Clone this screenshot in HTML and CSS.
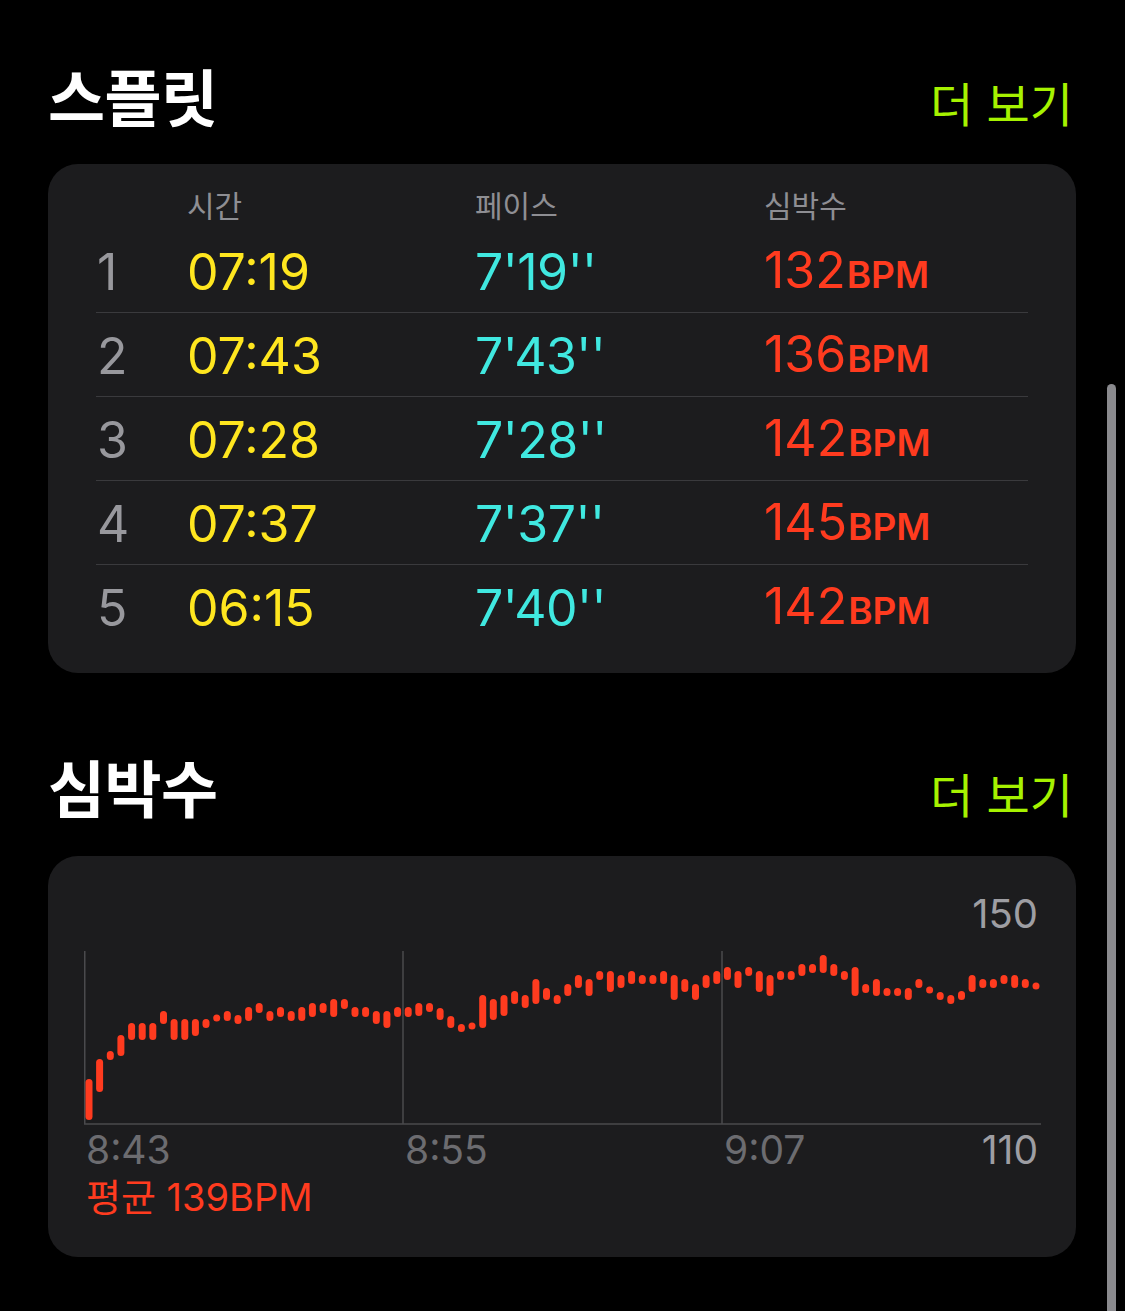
FILE: index.html
```html
<!DOCTYPE html>
<html lang="ko">
<head>
<meta charset="utf-8">
<title>스플릿 · 심박수</title>
<link rel="stylesheet" href="styles.css">
</head>
<body>
<main class="page">
  <header class="sec-head first">
    <h2 class="sec-title">스플릿</h2>
    <a class="more">더 보기</a>
  </header>
  <section class="card splits">
    <div class="row head">
      <span></span><span>시간</span><span>페이스</span><span>심박수</span>
    </div>
    <div class="row">
      <span class="idx">1</span><span class="time">07:19</span><span class="pace">7'19''</span><span class="hr">132<small>BPM</small></span>
    </div>
    <div class="row">
      <span class="idx">2</span><span class="time">07:43</span><span class="pace">7'43''</span><span class="hr">136<small>BPM</small></span>
    </div>
    <div class="row">
      <span class="idx">3</span><span class="time">07:28</span><span class="pace">7'28''</span><span class="hr">142<small>BPM</small></span>
    </div>
    <div class="row">
      <span class="idx">4</span><span class="time">07:37</span><span class="pace">7'37''</span><span class="hr">145<small>BPM</small></span>
    </div>
    <div class="row last">
      <span class="idx">5</span><span class="time">06:15</span><span class="pace">7'40''</span><span class="hr">142<small>BPM</small></span>
    </div>
  </section>

  <header class="sec-head second">
    <h2 class="sec-title">심박수</h2>
    <a class="more">더 보기</a>
  </header>
  <section class="card heart">
    <div class="ymax">150</div>
    <svg class="chart" width="957" height="180" viewBox="84 945 957 180">
      <g class="grid">
        <line x1="84.75" y1="950" x2="84.75" y2="1123"/>
        <line x1="403" y1="950" x2="403" y2="1123"/>
        <line x1="722" y1="950" x2="722" y2="1123"/>
        <line x1="84" y1="1123" x2="1041" y2="1123"/>
      </g>
      <g class="bars">
        <line x1="89" y1="1081.5" x2="89" y2="1115.5"/>
        <line x1="99.6" y1="1061.5" x2="99.6" y2="1087.5"/>
        <line x1="110.3" y1="1053.5" x2="110.3" y2="1055.5"/>
        <line x1="120.9" y1="1037.5" x2="120.9" y2="1051.5"/>
        <line x1="131.6" y1="1025.5" x2="131.6" y2="1035.5"/>
        <line x1="142.2" y1="1025.5" x2="142.2" y2="1035.5"/>
        <line x1="152.8" y1="1025.5" x2="152.8" y2="1035.5"/>
        <line x1="163.5" y1="1013.5" x2="163.5" y2="1019.5"/>
        <line x1="174.1" y1="1021.5" x2="174.1" y2="1035.5"/>
        <line x1="184.8" y1="1021.5" x2="184.8" y2="1035.5"/>
        <line x1="195.4" y1="1021.5" x2="195.4" y2="1031.5"/>
        <line x1="206" y1="1021.5" x2="206" y2="1023.5"/>
        <line x1="216.7" y1="1017" x2="216.7" y2="1017.1"/>
        <line x1="227.3" y1="1013.5" x2="227.3" y2="1016.5"/>
        <line x1="238" y1="1017.5" x2="238" y2="1019.5"/>
        <line x1="248.6" y1="1009.5" x2="248.6" y2="1016.5"/>
        <line x1="259.2" y1="1005.5" x2="259.2" y2="1008.5"/>
        <line x1="269.9" y1="1013.5" x2="269.9" y2="1016.5"/>
        <line x1="280.5" y1="1009.5" x2="280.5" y2="1012.5"/>
        <line x1="291.2" y1="1013.5" x2="291.2" y2="1016.5"/>
        <line x1="301.8" y1="1009.5" x2="301.8" y2="1016.5"/>
        <line x1="312.4" y1="1005.5" x2="312.4" y2="1012.5"/>
        <line x1="323.1" y1="1005.5" x2="323.1" y2="1008.5"/>
        <line x1="333.7" y1="1001.5" x2="333.7" y2="1012.5"/>
        <line x1="344.4" y1="1001.5" x2="344.4" y2="1004.5"/>
        <line x1="355" y1="1009.5" x2="355" y2="1012.5"/>
        <line x1="365.6" y1="1009.5" x2="365.6" y2="1012.5"/>
        <line x1="376.3" y1="1013.5" x2="376.3" y2="1019.5"/>
        <line x1="386.9" y1="1013.5" x2="386.9" y2="1023.5"/>
        <line x1="397.6" y1="1009.5" x2="397.6" y2="1012.5"/>
        <line x1="408.2" y1="1009.5" x2="408.2" y2="1012.5"/>
        <line x1="418.8" y1="1005.5" x2="418.8" y2="1011.5"/>
        <line x1="429.5" y1="1005.5" x2="429.5" y2="1007.5"/>
        <line x1="440.1" y1="1010.5" x2="440.1" y2="1015.5"/>
        <line x1="450.8" y1="1018.5" x2="450.8" y2="1023.5"/>
        <line x1="461.4" y1="1026.5" x2="461.4" y2="1027.5"/>
        <line x1="472" y1="1025" x2="472" y2="1025.1"/>
        <line x1="482.7" y1="997.5" x2="482.7" y2="1023.5"/>
        <line x1="493.3" y1="1001.5" x2="493.3" y2="1015.5"/>
        <line x1="504" y1="997.5" x2="504" y2="1011.5"/>
        <line x1="514.6" y1="993.5" x2="514.6" y2="999.5"/>
        <line x1="525.2" y1="997.5" x2="525.2" y2="1003.5"/>
        <line x1="535.9" y1="981.5" x2="535.9" y2="999.5"/>
        <line x1="546.5" y1="990.5" x2="546.5" y2="995.5"/>
        <line x1="557.2" y1="997.5" x2="557.2" y2="999.5"/>
        <line x1="567.8" y1="986.5" x2="567.8" y2="991.5"/>
        <line x1="578.4" y1="977.5" x2="578.4" y2="983.5"/>
        <line x1="589.1" y1="981.5" x2="589.1" y2="991.5"/>
        <line x1="599.7" y1="973.5" x2="599.7" y2="975.5"/>
        <line x1="610.4" y1="973.5" x2="610.4" y2="987.5"/>
        <line x1="621" y1="977.5" x2="621" y2="983.5"/>
        <line x1="631.6" y1="973.5" x2="631.6" y2="979.5"/>
        <line x1="642.3" y1="977.5" x2="642.3" y2="979.5"/>
        <line x1="652.9" y1="977.5" x2="652.9" y2="979.5"/>
        <line x1="663.6" y1="973.5" x2="663.6" y2="979.5"/>
        <line x1="674.2" y1="977.5" x2="674.2" y2="995.5"/>
        <line x1="684.8" y1="981.5" x2="684.8" y2="987.5"/>
        <line x1="695.5" y1="986.5" x2="695.5" y2="995.5"/>
        <line x1="706.1" y1="977.5" x2="706.1" y2="983.5"/>
        <line x1="716.8" y1="973.5" x2="716.8" y2="979.5"/>
        <line x1="727.4" y1="969.5" x2="727.4" y2="975.5"/>
        <line x1="738" y1="973.5" x2="738" y2="983.5"/>
        <line x1="748.7" y1="969.5" x2="748.7" y2="971.5"/>
        <line x1="759.3" y1="973.5" x2="759.3" y2="987.5"/>
        <line x1="770" y1="977.5" x2="770" y2="991.5"/>
        <line x1="780.6" y1="973.5" x2="780.6" y2="975.5"/>
        <line x1="791.2" y1="973.5" x2="791.2" y2="975.5"/>
        <line x1="801.9" y1="966.5" x2="801.9" y2="971.5"/>
        <line x1="812.5" y1="966.5" x2="812.5" y2="968.5"/>
        <line x1="823.2" y1="957.5" x2="823.2" y2="968.5"/>
        <line x1="833.8" y1="966.5" x2="833.8" y2="971.5"/>
        <line x1="844.4" y1="973.5" x2="844.4" y2="975.5"/>
        <line x1="855.1" y1="969.5" x2="855.1" y2="991.5"/>
        <line x1="865.7" y1="986.5" x2="865.7" y2="988.5"/>
        <line x1="876.4" y1="981.5" x2="876.4" y2="991.5"/>
        <line x1="887" y1="990.5" x2="887" y2="991.5"/>
        <line x1="897.6" y1="990.5" x2="897.6" y2="991.5"/>
        <line x1="908.3" y1="990.5" x2="908.3" y2="995.5"/>
        <line x1="918.9" y1="981.5" x2="918.9" y2="983.5"/>
        <line x1="929.6" y1="989" x2="929.6" y2="989.1"/>
        <line x1="940.2" y1="994.5" x2="940.2" y2="995.5"/>
        <line x1="950.8" y1="997.5" x2="950.8" y2="999.5"/>
        <line x1="961.5" y1="993.5" x2="961.5" y2="995.5"/>
        <line x1="972.1" y1="977.5" x2="972.1" y2="987.5"/>
        <line x1="982.8" y1="981.5" x2="982.8" y2="983.5"/>
        <line x1="993.4" y1="981.5" x2="993.4" y2="983.5"/>
        <line x1="1004" y1="977.5" x2="1004" y2="979.5"/>
        <line x1="1014.7" y1="977.5" x2="1014.7" y2="983.5"/>
        <line x1="1025.3" y1="981.5" x2="1025.3" y2="983.5"/>
        <line x1="1036" y1="985" x2="1036" y2="985.1"/>
      </g>
    </svg>
    <div class="xaxis">
      <span>8:43</span><span>8:55</span><span>9:07</span><span class="ymin">110</span>
    </div>
    <div class="avg">평균 139BPM</div>
  </section>
</main>
<div class="scroll-indicator"></div>
</body>
</html>
```

FILE: styles.css
```css
html, body {
  margin: 0;
  padding: 0;
  background: #000;
}

body {
  width: 1125px;
  min-height: 1311px;
  overflow: hidden;
  position: relative;
  font-family: "Inter", "Noto Sans CJK KR", sans-serif;
  color: #fff;
}

.page {
  padding: 0 49px 0 48px;
}

.sec-head {
  display: flex;
  justify-content: space-between;
  align-items: baseline;
  height: 70px;
}

.sec-head.first {
  padding-top: 60px;
  margin-bottom: 34px;
}

.sec-head.second {
  margin-top: 78px;
  margin-bottom: 35px;
}

.sec-title {
  margin: 0;
  font-family: "Noto Sans CJK KR", sans-serif;
  font-weight: 700;
  font-size: 62px;
  line-height: 70px;
  letter-spacing: -0.5px;
}

.more {
  font-family: "Noto Sans CJK KR", sans-serif;
  font-weight: 400;
  font-size: 47px;
  line-height: 70px;
  color: #a6f200;
  margin-right: 3px;
}

.card {
  background: #1c1c1e;
  border-radius: 30px;
}

/* splits table */
.splits {
  padding: 22px 48px 25px;
}

.row {
  display: grid;
  grid-template-columns: 91px 288px 289px 1fr;
  align-items: center;
  height: 83px;
  border-bottom: 1px solid #3a3a3d;
  font-size: 50px;
  line-height: 83px;
  white-space: nowrap;
}

.row.last {
  border-bottom: none;
}

.row.head {
  align-items: start;
  height: 43px;
  line-height: 36px;
  border-bottom: none;
  font-family: "Noto Sans CJK KR", sans-serif;
  font-size: 30px;
  color: #8e8e93;
}

.idx {
  color: #98989d;
  padding-left: 1px;
}

.time {
  color: #ffe61f;
}

.pace {
  color: #40e8e0;
  letter-spacing: -0.5px;
}

.hr {
  color: #ff3b1f;
}

.hr small {
  font-size: 37px;
  font-weight: 600;
  margin-left: 1px;
}

/* heart rate chart */
.heart {
  padding: 34px 35px 40px 36px;
}

.ymax {
  text-align: right;
  padding-right: 3px;
  font-size: 40px;
  line-height: 48px;
  color: #9e9ea3;
}

.chart {
  display: block;
  margin-top: 8px;
}

.grid line {
  stroke: #4a4a4d;
  stroke-width: 1.5;
}

.bars line {
  stroke: #ff3b1f;
  stroke-width: 7;
  stroke-linecap: round;
}

.xaxis {
  display: grid;
  grid-template-columns: 319px 319px 1fr auto;
  font-size: 39px;
  line-height: 48px;
  color: #6c6c70;
  padding-left: 2px;
}

.xaxis .ymin {
  color: #9e9ea3;
  padding-right: 3px;
}

.avg {
  margin-top: 3px;
  padding-left: 2px;
  font-size: 38px;
  line-height: 40px;
  color: #ff3b1f;
}

.scroll-indicator {
  position: absolute;
  left: 1107px;
  top: 384px;
  width: 9px;
  height: 960px;
  border-radius: 5px;
  background: #8a8a8e;
}
```
